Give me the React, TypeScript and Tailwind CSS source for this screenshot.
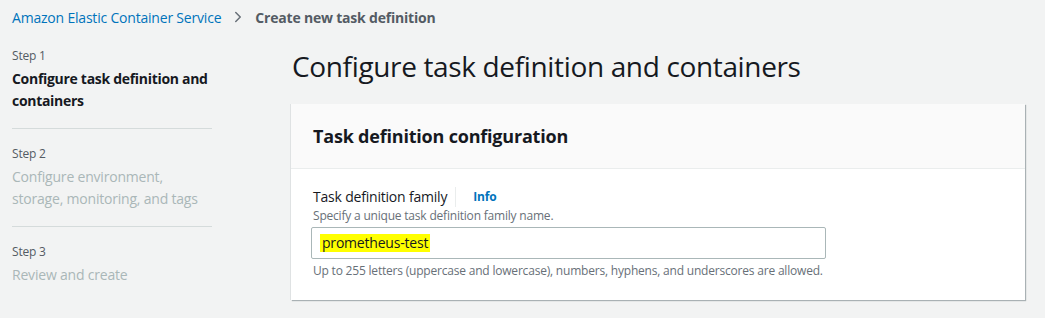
import React from 'react';
import { ChevronRight } from 'lucide-react';

const steps = [
  { label: 'Step 1', title: 'Configure task definition and containers', active: true },
  { label: 'Step 2', title: 'Configure environment, storage, monitoring, and tags', active: false },
  { label: 'Step 3', title: 'Review and create', active: false },
];

const App: React.FC = () => {
  return (
    <div className="w-[1045px] h-[318px] bg-[#f2f3f3] font-['Open_Sans',sans-serif] tracking-[-0.2px] overflow-hidden">
      {/* Breadcrumbs */}
      <div className="flex items-center h-[34px] pl-[12px] text-[14px]">
        <span className="text-[#0073bb]">Amazon Elastic Container Service</span>
        <ChevronRight size={18} strokeWidth={2} className="text-[#687078] mx-[8px]" />
        <span className="text-[#545b64] font-bold">Create new task definition</span>
      </div>

      <div className="flex">
        {/* Side nav */}
        <nav className="w-[200px] ml-[12px] mt-[13px]">
          {steps.map((s, i) => (
            <div key={s.label} className={i > 0 ? 'border-t border-[#d5dbdb] pt-[16px] mt-[16px]' : ''}>
              <p className="text-[12px] leading-[18px] text-[#545b64]">{s.label}</p>
              <p
                className={`text-[14px] leading-[22px] mt-[3px] ${
                  s.active ? 'w-[206px] font-bold text-[#16191f] tracking-[-0.3px]' : 'w-[200px] text-[#aab7b8]'
                }`}
              >
                {s.title}
              </p>
            </div>
          ))}
        </nav>

        {/* Main */}
        <main className="ml-[79px] w-[734px]">
          <h1 className="text-[28px] leading-[36px] text-[#16191f] tracking-[-0.35px] ml-[1px] mt-[14px]">
            Configure task definition and containers
          </h1>

          <div className="mt-[20px] bg-white shadow-[1px_1px_1px_0_rgba(0,28,36,0.3),-1px_0_0_0_rgba(0,28,36,0.08)]">
            <div className="bg-[#fafafa] border-b border-[#eaeded] h-[65px] flex items-center px-[22px]">
              <h2 className="text-[18px] font-bold text-[#16191f]">Task definition configuration</h2>
            </div>
            <div className="px-[20px] pt-[17px] pb-[20px]">
              <div className="flex items-center text-[14px] leading-[22px] text-[#16191f] ml-[2px]">
                <span>Task definition family</span>
                <span className="w-px h-[20px] bg-[#eaeded] ml-[8px] mr-[17px]" />
                <span className="text-[#0073bb] font-bold text-[12px]">Info</span>
              </div>
              <p className="text-[12px] leading-[16px] text-[#687078] ml-[2px]">
                Specify a unique task definition family name.
              </p>
              <div className="mt-[3px] w-[515px] h-[32px] border border-[#aab7b8] rounded-[2px] bg-white flex items-center px-[8px]">
                <span className="bg-[#ffff00] text-[14px] leading-[18px] text-[#16191f] px-[2px]">
                  prometheus-test
                </span>
              </div>
              <p className="mt-[3px] text-[12px] leading-[18px] text-[#687078] ml-[2px]">
                Up to 255 letters (uppercase and lowercase), numbers, hyphens, and underscores are allowed.
              </p>
            </div>
          </div>
        </main>
      </div>
    </div>
  );
};

export default App;
